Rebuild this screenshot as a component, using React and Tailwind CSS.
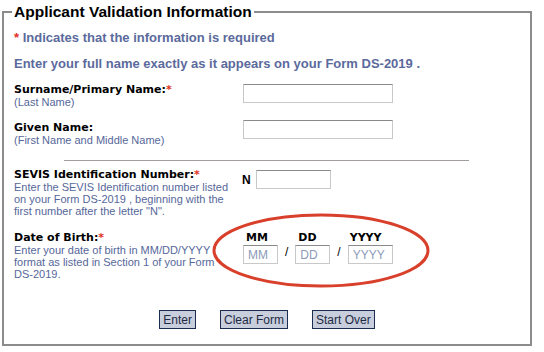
import React from 'react';

const Star = () => <span className="text-[#e0301e]">*</span>;

function TextBox({ className = '', placeholder }) {
  return (
    <input
      type="text"
      placeholder={placeholder}
      className={`h-[19px] bg-white border border-[#c9c9c9] border-t-[#8a8a8a] px-[4px] text-[12px] text-[#333] placeholder:text-[#8b9ab8] outline-none ${className}`}
    />
  );
}

function Label({ title, required, children }) {
  return (
    <div className="w-[229px] shrink-0">
      <div className="font-['DejaVu_Sans',sans-serif] text-[11px] font-bold text-black leading-[13px]">
        {title}
        {required && <Star />}
      </div>
      <div className="w-[218px] text-[11px] leading-[12px] text-[#56679a]">{children}</div>
    </div>
  );
}

export default function App() {
  return (
    <div className="relative w-[544px] h-[352px] bg-white font-['Liberation_Sans',Arial,sans-serif] overflow-hidden">
      <fieldset className="ml-[2px] mt-[3px] w-[530px] h-[343px] border-2 border-[#8c8c8c] pl-[10px] pr-[10px]">
        <legend className="-ml-[2px] px-[2px] text-[15.5px] font-bold text-black leading-[18px]">
          Applicant Validation Information
        </legend>

        <p className="mt-[9px] text-[13px] font-bold text-[#5b6a9c] leading-[16px]">
          <Star /> Indicates that the information is required
        </p>
        <p className="mt-[10px] text-[13px] font-bold text-[#5b6a9c] leading-[16px]">
          Enter your full name exactly as it appears on your Form DS-2019 .
        </p>

        <div className="mt-[11px] flex items-start">
          <Label title="Surname/Primary Name:" required>
            (Last Name)
          </Label>
          <TextBox className="w-[150px] mt-[1px]" />
        </div>

        <div className="mt-[13px] flex items-start">
          <Label title="Given Name:">(First Name and Middle Name)</Label>
          <TextBox className="w-[150px] -mt-[1px]" />
        </div>

        <div className="mt-[14px] ml-[50px] w-[405px] h-px bg-[#a39ca2]" />

        <div className="mt-[7px] flex items-start">
          <Label title="SEVIS Identification Number:" required>
            Enter the SEVIS Identification number listed on your Form DS-2019 , beginning with the first number after the letter "N".
          </Label>
          <div className="flex items-center mt-[2px]">
            <span className="text-[12px] font-bold text-black w-[14px] ml-[-1px]">N</span>
            <TextBox className="w-[75px]" />
          </div>
        </div>

        <div className="mt-[14px] flex items-start">
          <Label title="Date of Birth:" required>
            Enter your date of birth in MM/DD/YYYY format as listed in Section 1 of your Form DS-2019.
          </Label>
          <div className="flex items-end gap-[7px]">
            <div className="flex flex-col">
              <span className="font-['DejaVu_Sans',sans-serif] text-[11px] font-bold text-black leading-[13px] ml-[3px]">MM</span>
              <TextBox className="w-[35px] mt-[1px]" placeholder="MM" />
            </div>
            <span className="text-[12px] text-black mb-[3px]">/</span>
            <div className="flex flex-col">
              <span className="font-['DejaVu_Sans',sans-serif] text-[11px] font-bold text-black leading-[13px] ml-[3px]">DD</span>
              <TextBox className="w-[35px] mt-[1px]" placeholder="DD" />
            </div>
            <span className="text-[12px] text-black mb-[3px]">/</span>
            <div className="flex flex-col">
              <span className="font-['DejaVu_Sans',sans-serif] text-[11px] font-bold text-black leading-[13px] ml-[2px]">YYYY</span>
              <TextBox className="w-[45px] mt-[1px]" placeholder="YYYY" />
            </div>
          </div>
        </div>

        <div className="mt-[30px] flex justify-center gap-[24px]">
          {['Enter', 'Clear Form', 'Start Over'].map((t) => (
            <button
              key={t}
              className="h-[19px] px-[3px] bg-[#c8cedc] border border-[#1c2d52] text-[12px] text-[#1d2a44] leading-[16px]"
            >
              {t}
            </button>
          ))}
        </div>
      </fieldset>

      <svg
        className="absolute left-[211px] top-[212px]"
        width="222"
        height="77"
        viewBox="0 0 222 77"
      >
        <ellipse cx="110" cy="38.5" rx="107" ry="35.5" fill="none" stroke="#d8402b" strokeWidth="3" />
      </svg>
    </div>
  );
}
